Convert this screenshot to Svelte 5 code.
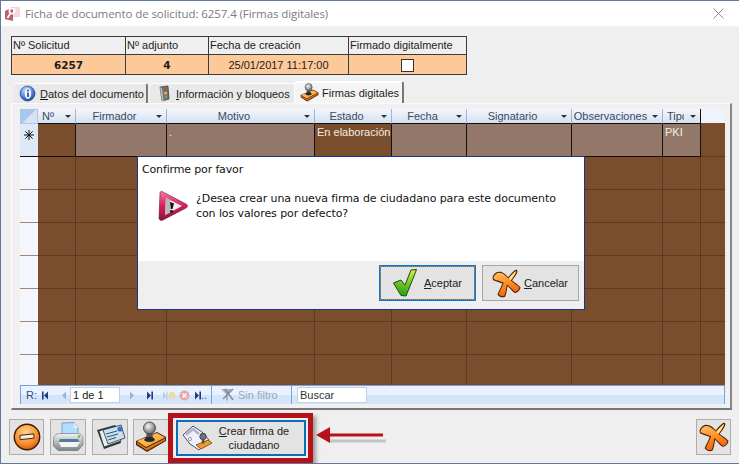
<script>
  const summary = [
    { label: 'Nº Solicitud', value: '6257', bold: true, w: 114, tight: true },
    { label: 'Nº adjunto', value: '4', bold: true, w: 83 },
    { label: 'Fecha de creación', value: '25/01/2017 11:17:00', w: 140 },
    { label: 'Firmado digitalmente', check: true, w: 118 }
  ];
  const columns = [
    { label: 'Nº', w: 38, left: true },
    { label: 'Firmador', w: 91 },
    { label: 'Motivo', w: 148 },
    { label: 'Estado', w: 77 },
    { label: 'Fecha', w: 75 },
    { label: 'Signatario', w: 105 },
    { label: 'Observaciones', w: 91 },
    { label: 'Tipo', w: 38, left: true, clip: true }
  ];
  const firstRow = [
    { text: '', brown: true },
    { text: '' },
    { text: '.' },
    { text: 'En elaboración', brown: true },
    { text: '' },
    { text: '' },
    { text: '' },
    { text: 'PKI' }
  ];
  const emptyRows = [0, 1, 2, 3, 4, 5, 6];
</script>

{#snippet stamp(size)}
  <svg width={size} height={size} viewBox="0 0 32 32">
    <defs>
      <linearGradient id="stampBase" x1="0" y1="0" x2="1" y2="1">
        <stop offset="0" stop-color="#ffce6a" /><stop offset="1" stop-color="#f09a2c" />
      </linearGradient>
      <radialGradient id="stampKnob" cx="0.4" cy="0.35" r="0.7">
        <stop offset="0" stop-color="#f5f5f5" /><stop offset="1" stop-color="#5d6065" />
      </radialGradient>
    </defs>
    <path d="M1 20 L22 11 L31 16 L31 20 L12 31 L1 24 Z" fill="#4a2206" />
    <path d="M2 20 L22 12 L30 16.5 L11 26 Z" fill="url(#stampBase)" />
    <path d="M2 21 L11 27 L30 17.5 L30 19.5 L12 29.5 L2 23 Z" fill="#d8741a" />
    <path d="M12 11 L17 11 L18 17 C17 19 12 19 11 17 Z" fill="#54575b" />
    <path d="M9 19 C10 14.5 19 14.5 20 19 C18 21.5 11 21.5 9 19 Z" fill="#26282a" />
    <circle cx="14.5" cy="7" r="6" fill="url(#stampKnob)" stroke="#33363a" stroke-width="0.8" />
  </svg>
{/snippet}

{#snippet cross(size)}
  <svg width={size} height={size} viewBox="0 0 32 32">
    <defs>
      <linearGradient id="crossFill" x1="0.3" y1="0" x2="0.6" y2="1">
        <stop offset="0" stop-color="#ffc066" /><stop offset="0.5" stop-color="#ff8f24" /><stop offset="1" stop-color="#ee5f0a" />
      </linearGradient>
    </defs>
    <path d="M0.5 9 C2 5 5 3 8 3 C12 3 15 6 18 9 C20 6 23 3 26 0.8 C28 0.4 28.5 2 27.8 4 C26.5 7 24 10 22 12.5 C25 15 28.5 17 31.4 20 C31.5 23 28 26.5 25 26.5 C22 24 19.5 21 17.2 18.8 C16.5 23 16 27 14.5 30.5 C12 32 8 31 6 28 C7.5 24 10 20 11.5 16 C8 14.5 4 13.5 1 12 Z" fill="#4e2205" />
    <path d="M1.7 9.4 C3 6 5.5 4.2 8 4.2 C12 4.2 15 7.5 18.4 10.5 C20 8 23 5 26 2.4 C27 2 27 3 26.5 4 C25 7 23 10 20.6 12.7 C24 15.5 27.5 17.5 30.2 20.2 C30 23 27.5 25.3 25.3 25.3 C22.5 23 19.5 19.5 16.4 17 C15.7 22 15 26 13.6 29.5 C11.5 30.6 8.6 29.8 7.4 27.6 C9 23.5 11.5 19.5 13 15.3 C9.5 13.5 5 12.5 1.7 11 Z" fill="url(#crossFill)" />
    <path d="M18.6 10.4 C20.5 8 23 5 26 2.6 C25.6 5.5 23 9 20.6 12.4 Z" fill="#ffe68a" />
  </svg>
{/snippet}

{#snippet navTriangle(dir, bar, color)}
  <svg width="7" height="9" viewBox="0 0 7 9">
    {#if dir === 'left'}
      <path d="M6 0.5 V8.5 L2 4.5 Z" fill={color} />
      {#if bar}<rect x="0" y="0.5" width="1.6" height="8" fill={color} />{/if}
    {:else}
      <path d="M1 0.5 V8.5 L5 4.5 Z" fill={color} />
      {#if bar}<rect x="5.4" y="0.5" width="1.6" height="8" fill={color} />{/if}
    {/if}
  </svg>
{/snippet}

<div class="window">
  <header class="titlebar">
    <svg class="app-icon" width="17" height="16" viewBox="0 0 17 16">
      <path d="M1 5 L9 1 L16 1 L16 11 L9 11 L9 15 L1 13 Z" fill="#f2d8da" />
      <path d="M1 5 L9 1 L9 15 L1 13 Z" fill="#bb5f6c" />
      <circle cx="8" cy="5" r="2.6" fill="none" stroke="#fff" stroke-width="1.7" />
      <path d="M6.5 7 L3.5 12" stroke="#fff" stroke-width="1.7" />
    </svg>
    <span class="title">Ficha de documento de solicitud: 6257.4 (Firmas digitales)</span>
    <svg class="close" width="11" height="11" viewBox="0 0 11 11">
      <path d="M0.5 0.5 L10.5 10.5 M10.5 0.5 L0.5 10.5" stroke="#8a8a8a" stroke-width="1" fill="none" />
    </svg>
  </header>

  <div class="body">
    <div class="summary">
      {#each summary as item}
        <div class="summary-col" style="width: {item.w}px">
          <div class="summary-label" class:tight={item.tight}>{item.label}</div>
          <div class="summary-value" class:bold={item.bold}>
            {#if item.check}<span class="checkbox"></span>{:else}{item.value}{/if}
          </div>
        </div>
      {/each}
    </div>

    <div class="tabs">
      <div class="tab first">
        <svg width="17" height="17" viewBox="0 0 17 17">
          <defs>
            <radialGradient id="infoBall" cx="0.4" cy="0.3" r="0.8">
              <stop offset="0" stop-color="#cfe4ff" /><stop offset="0.6" stop-color="#3f7fe0" /><stop offset="1" stop-color="#12307e" />
            </radialGradient>
          </defs>
          <circle cx="8.5" cy="8.5" r="7.5" fill="url(#infoBall)" stroke="#1c3376" stroke-width="0.6" />
          <ellipse cx="9" cy="8.5" rx="3.2" ry="5.4" fill="#f2f6fb" />
          <circle cx="9" cy="5.6" r="1" fill="#27408b" />
          <rect x="8.2" y="7.5" width="1.6" height="4.5" fill="#27408b" />
        </svg>
        <span><u>D</u>atos del documento</span>
      </div>
      <div class="tab second">
        <svg width="15" height="17" viewBox="0 0 15 17">
          <path d="M3 2 L11 1 L12 14 L5 16 Z" fill="#6f7276" stroke="#35373a" stroke-width="0.7" />
          <path d="M3 2 L5 3.5 L6.5 16 L5 16 Z" fill="#b9bcc0" />
          <circle cx="8.3" cy="4.6" r="1.4" fill="#c9473a" />
          <circle cx="8.6" cy="8.2" r="1.4" fill="#e5c23d" />
          <circle cx="8.9" cy="11.8" r="1.4" fill="#66ad3f" />
        </svg>
        <span><u>I</u>nformación y bloqueos</span>
      </div>
      <div class="tab active">
        {@render stamp(19)}
        <span>Firmas digitales</span>
      </div>
    </div>

    <div class="panel">
      <div class="grid">
        <div class="grid-head">
          <div class="corner"><span></span></div>
          {#each columns as col}
            <div class="head-cell" class:left={col.left} style="width: {col.w}px">
              <span class="head-label" class:clip={col.clip}>{col.label}</span>
              <i class="sort"></i>
            </div>
          {/each}
          <div class="head-rest"></div>
        </div>
        <div class="row first-row">
          <div class="selector new">
            <svg width="10" height="10" viewBox="0 0 10 10">
              <path d="M5 0 V10 M0 5 H10 M1.4 1.4 L8.6 8.6 M8.6 1.4 L1.4 8.6" stroke="#111" stroke-width="1" />
            </svg>
          </div>
          {#each firstRow as cell, i}
            <div class="cell" class:brown={cell.brown} style="width: {columns[i].w}px">{cell.text}</div>
          {/each}
          <div class="rest"></div>
        </div>
        {#each emptyRows as r}
          <div class="row empty">
            <div class="selector"></div>
            {#each columns as col}
              <div class="cell brown" style="width: {col.w}px"></div>
            {/each}
            <div class="rest"></div>
          </div>
        {/each}
        <div class="navbar">
          <span class="nav-r">R:</span>
          <span class="nav-btn first-btn">{@render navTriangle('left', true, '#1d3f7e')}</span>
          <span class="nav-btn prev-btn">{@render navTriangle('left', false, '#9db3d4')}</span>
          <span class="page-box">1 de 1</span>
          <span class="nav-btn">{@render navTriangle('right', false, '#9db3d4')}</span>
          <span class="nav-btn">{@render navTriangle('right', true, '#1d3f7e')}</span>
          <span class="nav-btn new-btn">
            <svg width="13" height="9" viewBox="0 0 13 9">
              <path d="M0 0.5 V8.5 L3 4.5 Z" fill="#b8cbe4" /><rect x="3.4" y="0.5" width="1.2" height="8" fill="#b8cbe4" />
              <circle cx="9" cy="4.5" r="3.5" fill="#e9dca6" />
            </svg>
          </span>
          <span class="nav-btn del-btn">
            <svg width="11" height="11" viewBox="0 0 11 11">
              <circle cx="5.5" cy="5.5" r="5" fill="#e4a9a6" />
              <path d="M3.5 3.5 L7.5 7.5 M7.5 3.5 L3.5 7.5" stroke="#fff" stroke-width="1.4" />
            </svg>
          </span>
          <span class="nav-btn more-btn">
            {@render navTriangle('right', true, '#1d3f7e')}<b>..</b>
          </span>
          <span class="nav-sep"></span>
          <span class="filter">
            <svg width="15" height="14" viewBox="0 0 15 14">
              <path d="M1 1 H12 L8 6 V12 L6 13 V6 Z" fill="#a9b3bf" />
              <path d="M3 11 L13 1 M5 1 L13 12" stroke="#7f8b99" stroke-width="1.4" />
            </svg>
            Sin filtro
          </span>
          <span class="nav-sep second-sep"></span>
          <span class="search">Buscar</span>
        </div>
      </div>
    </div>

    <footer class="actions">
      <button class="action exit-doc" type="button">
        <svg width="28" height="28" viewBox="0 0 28 28">
          <defs>
            <radialGradient id="exitBall" cx="0.45" cy="0.3" r="0.8">
              <stop offset="0" stop-color="#ffd68c" /><stop offset="0.65" stop-color="#f58a28" /><stop offset="1" stop-color="#c04d08" />
            </radialGradient>
          </defs>
          <circle cx="14" cy="14" r="13.4" fill="#3b1a08" />
          <circle cx="14" cy="14" r="12" fill="url(#exitBall)" />
          <rect x="7" y="11.5" width="14" height="4.5" rx="1" transform="rotate(-6 14 14)" fill="#f4efe6" stroke="#4c2408" stroke-width="1" />
        </svg>
      </button>
      <button class="action printer" type="button">
        <svg width="32" height="30" viewBox="0 0 32 30">
          <defs>
            <linearGradient id="printerBody" x1="0" y1="0" x2="0" y2="1">
              <stop offset="0" stop-color="#f2f4f5" /><stop offset="1" stop-color="#7c8287" />
            </linearGradient>
          </defs>
          <path d="M10 1 L22 0.5 L26 6 L26 15 L10 15 Z" fill="#b4dcfb" stroke="#5f92c8" stroke-width="0.8" />
          <path d="M22 0.5 L22 6 L26 6 Z" fill="#e6f3fd" />
          <path d="M1.5 17 C2 13 5 11.5 9 11.5 L25 11.5 C29 11.5 31 14 31 17.5 L31 23 L26 28.5 L6 28.5 L1.5 24 Z" fill="url(#printerBody)" stroke="#666b70" stroke-width="0.6" />
          <path d="M8 17 H26 L27.5 20 H7 Z" fill="#4f7f97" />
          <path d="M7 20 H28 L25 25 H9 Z" fill="#f2f4f5" />
          <circle cx="27" cy="14.5" r="1.3" fill="#5cc04a" />
        </svg>
      </button>
      <button class="action cards" type="button">
        <svg width="32" height="30" viewBox="0 0 32 30">
          <path d="M3 8 L21 3 L27 21 L10 27 Z" fill="#2e3438" />
          <path d="M5 9 L22 4 L27 19 L10 25 Z" fill="#e8eef2" stroke="#2b3034" stroke-width="0.8" />
          <path d="M9 8 L27 3 L31 16 L14 22 Z" fill="#c8e1f0" stroke="#2b3034" stroke-width="0.8" />
          <circle cx="26" cy="7" r="2.6" fill="#3573c8" />
          <path d="M12 12 L23 9 M13 15 L24 12 M14 18 L22 15.5" stroke="#36525f" stroke-width="1" />
        </svg>
      </button>
      <button class="action stamp-btn" type="button">{@render stamp(32)}</button>
      <div class="create-wrap">
        <button class="create" type="button">
          <svg width="31" height="27" viewBox="0 0 31 27">
            <path d="M1 10 L11 1 L20 7 L27 15 L17 25 L8 19 Z" fill="#eef1f9" stroke="#4b4f63" stroke-width="1" />
            <path d="M4 10 L11 4 L17 9" fill="none" stroke="#a9b3cc" stroke-width="2.4" />
            <circle cx="8" cy="14" r="1.6" fill="#fff" stroke="#8d93a5" />
            <path d="M14 20 L26 15 L30 18 L19 24 Z" fill="#f09a2c" stroke="#763a08" stroke-width="0.8" />
            <circle cx="21" cy="11.5" r="3.2" fill="#707479" stroke="#2c2e30" stroke-width="0.8" />
            <rect x="19.8" y="14" width="2.6" height="4.5" fill="#4c4f52" />
          </svg>
          <span class="create-label"><u>C</u>rear firma de<br />ciudadano</span>
        </button>
      </div>
      <svg class="arrow" width="72" height="24" viewBox="0 0 72 24">
        <path d="M14 16 H71" stroke="#a8a8a8" stroke-width="3" opacity="0.6" />
        <path d="M1 10 L15 2 V8.6 H68 V11.4 H15 V18 Z" fill="#b5121b" />
      </svg>
      <button class="action exit" type="button">{@render cross(30)}</button>
    </footer>
  </div>

  <div class="dialog">
    <div class="dialog-main">
      <div class="dialog-title">Confirme por favor</div>
      <div class="dialog-message">
        <svg width="30" height="32" viewBox="0 0 30 32">
          <defs>
            <linearGradient id="warnFill" x1="0" y1="0" x2="0" y2="1">
              <stop offset="0" stop-color="#f37ea0" /><stop offset="0.5" stop-color="#d81e5c" /><stop offset="1" stop-color="#8c1038" />
            </linearGradient>
          </defs>
          <path d="M4 1.5 C3 1 2 2 2 3 L1 28 C1 30 3 31 5 30 L28 18 C30 17 30 15 28 14 Z" fill="url(#warnFill)" stroke="#5e1530" stroke-width="0.6" />
          <path d="M8 8 L7 25 L24 16 Z" fill="#f0f0f0" />
          <path d="M8 8 L7 25 L13 22 L12.5 10 Z" fill="#b8b8b8" />
          <path d="M12 12 L16 13.5 L14.5 19 L13 19 Z" fill="#111" />
          <circle cx="13.6" cy="21.4" r="1.4" fill="#111" />
        </svg>
        <p>¿Desea crear una nueva firma de ciudadano para este documento<br />con los valores por defecto?</p>
      </div>
    </div>
    <div class="dialog-buttons">
      <button class="dlg-btn focused" type="button">
        <svg width="24" height="30" viewBox="0 0 24 28">
          <defs>
            <linearGradient id="checkFill" x1="0.6" y1="0" x2="0.4" y2="1">
              <stop offset="0" stop-color="#c8f040" /><stop offset="1" stop-color="#22a012" />
            </linearGradient>
          </defs>
          <path d="M0.5 14 L8 11 L12 16 L18 1 L23.5 0.5 L21 7 L13 27 L8 26.5 Z" fill="url(#checkFill)" stroke="#1d4a12" stroke-width="1" stroke-linejoin="round" />
        </svg>
        <span><u>A</u>ceptar</span>
      </button>
      <button class="dlg-btn cancel" type="button">
        {@render cross(29)}
        <span><u>C</u>ancelar</span>
      </button>
    </div>
  </div>
</div>

<style>
  :global(body) { margin: 0; background: #fff; }
  * { box-sizing: border-box; }
  .window {
    position: relative;
    width: 739px;
    height: 464px;
    display: flex;
    flex-direction: column;
    border-top: 1px solid #62799a;
    border-left: 1px solid #62799a;
    border-bottom: 1px solid #62799a;
    background: #efefef;
    overflow: hidden;
    font-family: "Liberation Sans", sans-serif;
    font-size: 11px;
    color: #1d1d1d;
  }
  .titlebar {
    height: 25px;
    background: #fff;
    display: flex;
    align-items: center;
    padding: 0 15px 0 3px;
  }
  .app-icon { margin-right: 4px; }
  .title { flex: 1; font-family: "Open Sans", sans-serif; font-size: 11.5px; letter-spacing: -0.09px; color: #7c7c7c; }
  .body { flex: 1; display: flex; flex-direction: column; padding: 10px 6px 0 10px; min-height: 0; }

  .summary { display: flex; width: 456px; height: 39px; border: 1px solid #3b3b3b; }
  .summary-col { display: flex; flex-direction: column; border-right: 1px solid #3b3b3b; }
  .summary-col:last-child { border-right: 0; flex: 1; }
  .summary-label { height: 18px; line-height: 17px; padding-left: 1px; background: #efefef; border-bottom: 1px solid #3b3b3b; white-space: nowrap; overflow: hidden; }
  .summary-value { flex: 1; display: flex; align-items: center; justify-content: center; background: #fdc998; }
  .summary-value.bold { font-family: "DejaVu Sans", sans-serif; font-size: 10.5px; font-weight: 700; }
  .checkbox { width: 13px; height: 13px; background: #fff; border: 1px solid #333; margin-top: 1px; }

  .tabs { display: flex; align-items: flex-end; height: 20px; margin-top: 8px; padding-left: 3px; position: relative; z-index: 1; }
  .tab { display: flex; align-items: center; gap: 4px; height: 20px; white-space: nowrap; background: #e9e9e9; border-top: 1px solid #fff; border-radius: 3px 3px 0 0; }
  .tab svg { flex: none; }
  .tab.first { width: 134px; padding-left: 5px; border-right: 2px solid #777; }
  .tab.second { width: 144px; padding-left: 7px; margin-left: 2px; }
  .tab.active { width: 110px; height: 22px; padding-left: 6px; gap: 3px; background: #f4f4f4; border-right: 2px solid #777; box-shadow: inset 1px 1px 0 #fff; }

  .panel { width: 721px; height: 307px; padding: 5px 6px 5px 8px; background: #f0f0f0; border: 1px solid #fafafa; border-right: 2px solid #868686; border-bottom: 2px solid #777; }

  .grid { width: 705px; }
  .grid-head { display: flex; height: 15px; }
  .corner { width: 18px; background: #a9c6ee; padding: 1px; }
  .corner span { display: block; width: 100%; height: 100%; background: linear-gradient(135deg, #a9c6ee 50%, #d8e2f0 50%); }
  .head-cell { position: relative; background: linear-gradient(#f4f7fc, #d5e0f0); border-right: 1px solid #9db6d8; border-bottom: 1px solid #111; color: #3a4a63; line-height: 14px; text-align: center; padding-right: 13px; white-space: nowrap; overflow: hidden; }
  .head-cell.left { text-align: left; padding-left: 4px; }
  .head-cell:nth-last-child(2) { border-right: 1px solid #111; }
  .head-label.clip { display: inline-block; width: 17px; overflow: hidden; vertical-align: top; }
  .sort { position: absolute; right: 4px; top: 6px; width: 0; height: 0; border: 3px solid transparent; border-top: 3px solid #30343a; border-bottom: 0; }
  .head-rest { flex: 1; background: #eff4fc; border-bottom: 1px solid #7a4e2c; }

  .row { display: flex; height: 33px; }
  .selector { width: 18px; background: #f4f6fe; border-bottom: 1px solid #a08878; }
  .selector.new { background: #dfe8f6; border-bottom: 1px solid #111; display: flex; justify-content: center; align-items: flex-start; padding-top: 6px; }
  .cell { background: #93786a; border-right: 1px solid #111; border-bottom: 1px solid #111; color: #f4ece4; line-height: 14px; padding: 1px 2px; white-space: nowrap; overflow: hidden; }
  .cell.brown { background: #7a4e2c; }
  .rest { flex: 1; background: #7a4e2c; border-bottom: 1px solid #5d3a1f; }
  .empty .cell { border-right: 1px solid #5d3a1f; border-bottom: 1px solid #5d3a1f; }

  .navbar { display: flex; align-items: center; height: 19px; margin-top: -3px; position: relative; padding-left: 5px; color: #3e4f69; line-height: 14px; background: linear-gradient(#e9f2fe 50%, #d3e4fb 50%); border-top: 1px solid #7ba0d8; border-left: 1px solid #7ba0d8; border-right: 1px solid #7ba0d8; }
  .nav-r { width: 16px; color: #2f4f86; }
  .nav-btn { display: flex; align-items: center; width: 17px; padding-left: 4px; }
  .nav-btn svg { display: block; }
  .first-btn { width: 15px; padding-left: 0; }
  .prev-btn { width: 13px; padding-left: 3px; }
  .page-box { width: 50px; height: 16px; margin: 0 5px 0 0; padding-left: 2px; background: #fff; border: 1px solid #b9d0ee; color: #222; }
  .new-btn { width: 20px; }
  .del-btn { width: 15px; padding-left: 0; }
  .more-btn { width: 17px; padding-left: 0; gap: 0; }
  .more-btn b { font-weight: 400; line-height: 8px; }
  .nav-sep { width: 1px; height: 18px; background: #7ba0d8; }
  .filter { display: flex; align-items: center; gap: 3px; width: 79px; padding-left: 8px; color: #9aa8ba; }
  .second-sep { margin-right: 5px; }
  .search { width: 70px; height: 16px; padding-left: 2px; background: #fff; border: 1px solid #b9d0ee; color: #333; }

  .actions { position: relative; display: flex; align-items: center; height: 36px; margin-top: 9px; gap: 5px; margin-left: -2px; }
  .action { width: 36px; height: 36px; padding: 0; background: #e3e3e3; border: 1px solid #adadad; display: flex; align-items: center; justify-content: center; }
  .exit-doc { width: 35px; margin-right: 1px; }
  .cards { margin-left: 1px; }
  .create-wrap { position: absolute; left: 159px; top: -6px; width: 145px; height: 50px; display: flex; align-items: center; justify-content: center; background: #efefef; border: 5px solid #b5121b; box-shadow: 3px 3px 4px #9a9a9a; }
  .create { width: 130px; height: 36px; padding: 0 0 0 4px; display: flex; align-items: center; background: #e3e3e3; border: 2px solid #0a6fb5; font: inherit; color: #222; }
  .create-label { flex: 1; text-align: center; line-height: 14px; padding-right: 8px; }
  .arrow { position: absolute; left: 306px; top: 6px; }
  .exit { position: absolute; right: 2px; top: 0; width: 35px; }

  .dialog { position: absolute; left: 136px; top: 155px; width: 448px; height: 154px; display: flex; flex-direction: column; background: #efefef; border: 1px solid #17378c; }
  .dialog-main { height: 104px; background: #fff; padding: 5px 4px 0 4px; }
  .dialog-title { font-family: "DejaVu Sans", sans-serif; font-size: 11px; letter-spacing: -0.15px; line-height: 15px; color: #111; }
  .dialog-message { display: flex; margin-top: 13px; padding-left: 16px; gap: 8px; }
  .dialog-message p { margin: 1px 0 0; font-family: "DejaVu Sans", sans-serif; font-size: 11px; letter-spacing: -0.09px; line-height: 15px; color: #111; white-space: nowrap; }
  .dialog-buttons { flex: 1; display: flex; justify-content: flex-end; gap: 6px; padding: 4px 5px 0 0; }
  .dlg-btn { width: 97px; height: 36px; display: flex; align-items: center; padding: 0; font: inherit; color: #222; background: #e3e3e3; }
  .focused { border: 2px solid #0a78d7; outline: 1px dotted #e8801a; outline-offset: -2px; padding-left: 12px; gap: 7px; }
  .cancel { border: 1px solid #a6a6a6; padding-left: 9px; gap: 3px; }
</style>
